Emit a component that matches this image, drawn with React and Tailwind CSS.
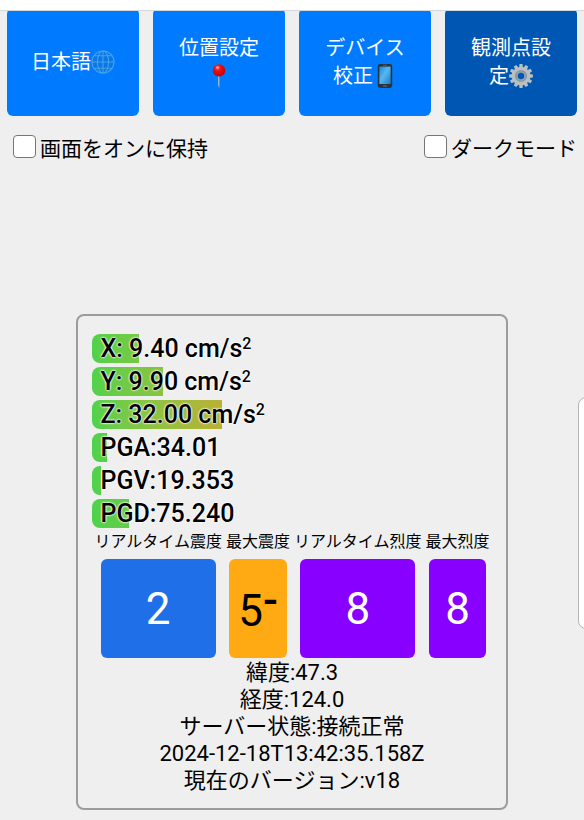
const readings = [
  { label: "X: 9.40 cm/s", squared: true, bar: "w-[47px] from-[#4fd24b] to-[#78c844]" },
  { label: "Y: 9.90 cm/s", squared: true, bar: "w-[71px] from-[#4fd24b] to-[#8ac23f]" },
  { label: "Z: 32.00 cm/s", squared: true, bar: "w-[130px] from-[#4fd24b] to-[#b9b035]" },
  { label: "PGA:34.01", bar: "w-[15px] from-[#4fd24b] to-[#58d049]" },
  { label: "PGV:19.353", bar: "w-[9px] from-[#4fd24b] to-[#54d14a]" },
  { label: "PGD:75.240", bar: "w-[37px] from-[#4fd24b] to-[#64cd47]" },
];

const scales = [
  { label: "リアルタイム震度", value: "2", style: "bg-[#1f6fe8] text-white" },
  { label: "最大震度", value: "5", sign: "-", style: "bg-[#ffaa13] text-black" },
  { label: "リアルタイム烈度", value: "8", style: "bg-[#8800ff] text-white" },
  { label: "最大烈度", value: "8", style: "bg-[#8800ff] text-white" },
];

const info = [
  "緯度:47.3",
  "経度:124.0",
  "サーバー状態:接続正常",
  "2024-12-18T13:42:35.158Z",
  "現在のバージョン:v18",
];

function Globe() {
  return (
    <svg viewBox="0 0 24 24" className="inline-block size-6 align-[-5px]" fill="none" stroke="#42a5e8" strokeWidth="1.1" aria-hidden="true">
      <circle cx="12" cy="12" r="11" fill="#0b76e6" />
      <ellipse cx="12" cy="12" rx="5.6" ry="11" />
      <path d="M12 1v22M1 12h22M3.2 5.8h17.6M3.2 18.2h17.6" />
    </svg>
  );
}

function Pin() {
  return (
    <svg viewBox="0 0 24 24" className="inline-block size-6 align-[-5px]" aria-hidden="true">
      <defs>
        <radialGradient id="pinHead" cx="0.4" cy="0.3" r="0.7">
          <stop offset="0" stopColor="#ff6a5c" />
          <stop offset="0.35" stopColor="#f01010" />
          <stop offset="1" stopColor="#bd0008" />
        </radialGradient>
      </defs>
      <path d="M11.1 11h1.8v9.5L12 24l-.9-3.5z" fill="#b4c2cd" />
      <path d="M12.4 12v10" stroke="#56708a" strokeWidth="0.7" />
      <circle cx="12" cy="6.4" r="6.2" fill="url(#pinHead)" />
      <ellipse cx="10.5" cy="3.6" rx="1.6" ry="1.1" fill="#ffb0a6" />
    </svg>
  );
}

function Phone() {
  return (
    <svg viewBox="0 0 24 24" className="inline-block size-6 align-[-5px]" aria-hidden="true">
      <defs>
        <linearGradient id="screen" x1="0" y1="0" x2="1" y2="1">
          <stop offset="0" stopColor="#1f86cf" />
          <stop offset="0.45" stopColor="#55b8f2" />
          <stop offset="1" stopColor="#1b7cc6" />
        </linearGradient>
      </defs>
      <rect x="4.8" y="0" width="14.4" height="24" rx="2.4" fill="#2c3338" />
      <rect x="6.4" y="2.6" width="11.2" height="17.4" fill="url(#screen)" />
      <rect x="10" y="21.4" width="4" height="1.2" rx="0.6" fill="#6b767d" />
      <path d="M10 1.3h4" stroke="#6b767d" strokeWidth="0.6" />
    </svg>
  );
}

function Gear() {
  const angles = [0, 30, 60, 90, 120, 150, 180, 210, 240, 270, 300, 330];
  return (
    <svg viewBox="0 0 24 24" className="inline-block size-6 align-[-5px]" aria-hidden="true">
      {angles.map((a) => (
        <path key={a} d="M10.1 4l.4-3.9h3l.4 3.9z" fill="#b9c0c4" transform={`rotate(${a} 12 12)`} />
      ))}
      <circle cx="12" cy="12" r="6.8" fill="none" stroke="#b9c0c4" strokeWidth="5" />
      <circle cx="12" cy="12" r="5.2" fill="none" stroke="#8b979d" strokeWidth="1.8" />
      <circle cx="12" cy="12" r="3.9" fill="none" stroke="#aab4b9" strokeWidth="0.9" />
    </svg>
  );
}

function NavButton({ color, children }) {
  return (
    <button type="button" className={`h-[108px] flex-1 rounded-md px-[18px] text-xl leading-7 text-white ${color}`}>
      {children}
    </button>
  );
}

function Check({ children }) {
  return (
    <label className="flex items-center gap-1">
      <input
        type="checkbox"
        className="mb-[6px] size-[23px] appearance-none rounded-[4px] border border-[#767676] bg-white checked:bg-[#007bff]"
      />
      <span className="text-[21px] leading-9">{children}</span>
    </label>
  );
}

export default function App() {
  return (
    <div className="relative min-h-screen overflow-hidden bg-[#efefef] font-[Roboto,'Noto_Sans_CJK_JP',sans-serif] text-black">
      <header className="relative z-10 h-[11px] border-b border-[#d3d8dc] bg-white" />
      <nav className="-mt-[3px] flex gap-[14px] px-[7px]">
        <NavButton color="bg-[#007bff]">日本語<Globe /></NavButton>
        <NavButton color="bg-[#007bff]">位置設定<Pin /></NavButton>
        <NavButton color="bg-[#007bff]">デバイス校正<Phone /></NavButton>
        <NavButton color="bg-[#0056b3]">観測点設定<Gear /></NavButton>
      </nav>
      <div className="mt-[15px] flex justify-between pl-[13px] pr-[7px]">
        <Check>画面をオンに保持</Check>
        <Check>ダークモード</Check>
      </div>

      <main className="mx-auto mt-[147px] w-fit rounded-lg border-2 border-[#9b9d9c] px-[14px] pb-[14px] pt-[18px]">
        <ul className="flex flex-col gap-1">
          {readings.map((r) => (
            <li key={r.label} className="relative">
              <span className={`absolute left-0 top-0 h-[29px] rounded-l-lg bg-linear-to-r ${r.bar}`} />
              <span className="relative block pl-2 text-[25px] font-medium leading-[29px] [text-shadow:0_0_2px_#fff,0_0_2px_#fff,0_0_2px_#fff]">
                {r.label}
                {r.squared && <sup className="text-base leading-none">2</sup>}
              </span>
            </li>
          ))}
        </ul>

        <table className="mx-auto border-collapse text-center">
          <thead>
            <tr>
              {scales.map((s) => (
                <th key={s.label} scope="col" className="whitespace-nowrap px-[2px] pb-[5px] pt-[2px] text-base font-normal leading-6">
                  {s.label}
                </th>
              ))}
            </tr>
          </thead>
          <tbody>
            <tr>
              {scales.map((s) => (
                <td key={s.label} className="px-[2px] py-0">
                  <div className={`mx-auto flex h-[99px] w-[90%] items-center justify-center rounded-md text-[44px] leading-none ${s.style}`}>
                    <span>
                      {s.value}
                      {s.sign && <span className="align-[11px] font-medium leading-8">{s.sign}</span>}
                    </span>
                  </div>
                </td>
              ))}
            </tr>
          </tbody>
        </table>

        <div className="mt-px text-center text-[22px] leading-[27px]">
          {info.map((line) => (
            <p key={line}>{line}</p>
          ))}
        </div>
      </main>

      <aside className="absolute -right-2 top-[397px] h-[232px] w-[14px] rounded-l-lg border border-[#b5b5b5] bg-white" />
    </div>
  );
}
